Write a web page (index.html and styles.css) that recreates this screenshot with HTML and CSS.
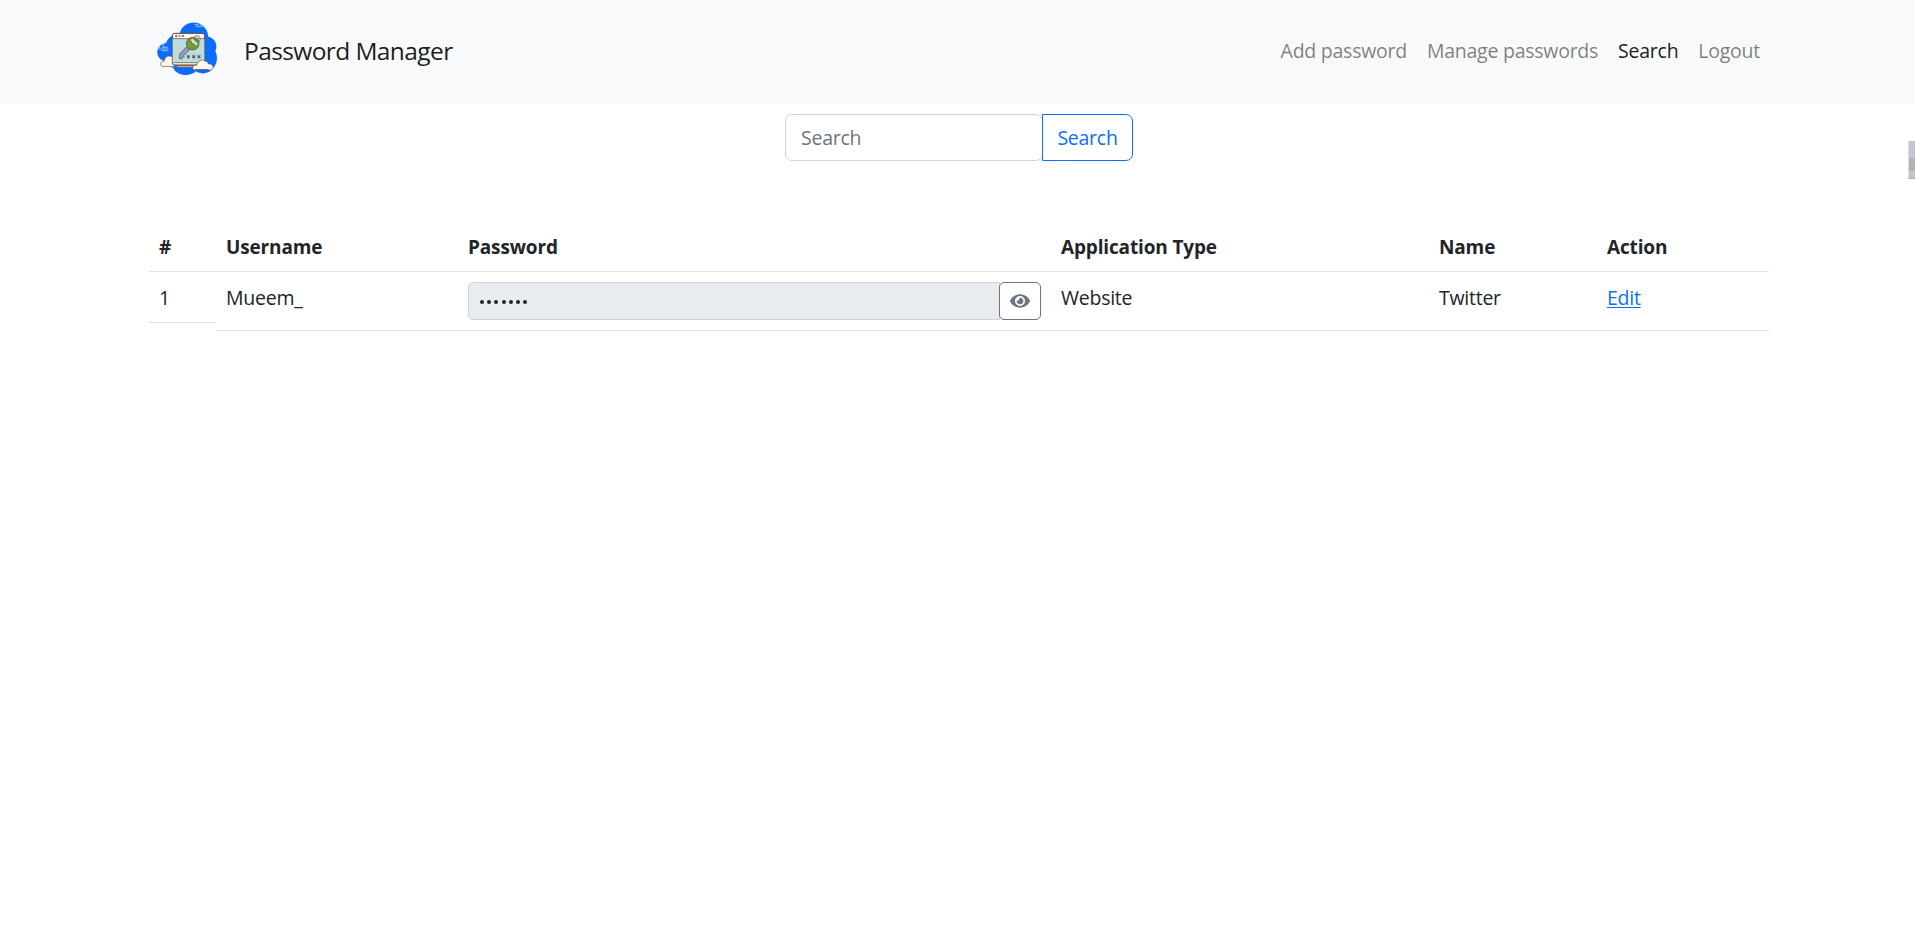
FILE: index.html
```html
<!DOCTYPE html>
<html lang="en">
<head>
    <meta charset="UTF-8">
    <meta name="viewport" content="width=device-width, initial-scale=1.0">
    <title>Password Manager</title>
    <link rel="stylesheet" href="styles.css">
</head>
<body>
    <nav class="navbar">
        <a class="navbar-brand" href="#">
            <svg class="logo" viewBox="30 30 192 168" aria-hidden="true">
                <path d="M104 72C112 26 184 24 190 80c22 5 29 27 21 43 10 22 4 44-10 54-8 15-34 17-48 7-20 18-57 14-68-9l-24-22c-31-2-34-49 2-54 7-19 25-28 41-27z" fill="#0b6cff"/>
                <path d="M149 44h11m4 0h7M153 49h22M38 112h8m5 0h18M40 117h31M50 122h18M55 102v10" stroke="#d8e8ff" stroke-width="2"/>
                <path d="M50 169c-7-7-2-16 7-15 2-12 10-18 21-15l11 4v27z" fill="#fff7e9" stroke="#694f50" stroke-width="2"/>
                <path d="M91 165h79l-8 8h-63z" fill="#b9a9a5" stroke="#59403f" stroke-width="2"/>
                <rect x="82" y="70" width="97" height="95" rx="7" fill="#fff8ee" stroke="#59403f" stroke-width="3"/>
                <path d="M83 86h95v72H83z" fill="#b9dedd"/>
                <path d="M83 86h95M85 158h92" stroke="#59403f" stroke-width="2"/>
                <circle cx="94" cy="78" r="3" fill="#ed6672" stroke="#59403f"/>
                <circle cx="104" cy="78" r="3" fill="#efbc4c" stroke="#59403f"/>
                <circle cx="114" cy="78" r="3" fill="#83a843" stroke="#59403f"/>
                <circle cx="156" cy="86" r="8" fill="none" stroke="#8b7774" stroke-width="5"/>
                <circle cx="156" cy="86" r="8" fill="none" stroke="#e4dcd5" stroke-width="2"/>
                <path d="m124 111 10 8-18 18 2 3-5 1-2 6-8-1 1-14z" fill="#9799b9" stroke="#514553" stroke-width="2"/>
                <circle cx="143" cy="101" r="19" fill="#739b38" stroke="#4c552e" stroke-width="2"/>
                <path d="m134 90 8-6 18 17-3 7-7-1-4-6-6-1-1-6z" fill="#d9e0d6" stroke="#4c552e" stroke-width="2"/>
                <path d="M130 134v12m-5-9 10 6m0-6-10 6m21-9v12m-5-9 10 6m0-6-10 6m21-9v12m-5-9 10 6m0-6-10 6" stroke="#55404a" stroke-width="2.5"/>
                <path d="M145 178c-5-8 2-14 10-12 3-13 15-20 24-13 7 0 10 4 11 9 10-2 17 6 13 14-3 4-7 3-12 3h-41z" fill="#fff7e9"/>
                <path d="M145 178c-5-8 2-14 10-12 3-13 15-20 24-13 7 0 10 4 11 9 10-2 17 6 13 14l-6 3m-6 0h-41z" fill="none" stroke="#694f50" stroke-width="2"/>
            </svg>
            <span>Password Manager</span>
        </a>
        <div class="navbar-nav">
            <a class="nav-link" href="#">Add password</a>
            <a class="nav-link" href="#">Manage passwords</a>
            <a class="nav-link active" href="#">Search</a>
            <a class="nav-link" href="#">Logout</a>
        </div>
    </nav>

    <form class="search-form">
        <input type="text" class="search-input" placeholder="Search">
        <button type="button" class="search-button">Search</button>
    </form>

    <div class="table">
        <div class="row header">
            <div>#</div>
            <div>Username</div>
            <div>Password</div>
            <div>Application Type</div>
            <div>Name</div>
            <div>Action</div>
        </div>
        <div class="row">
            <div class="row-number">1</div>
            <div>Mueem_</div>
            <div class="password-group">
                <div class="password-field"><i></i><i></i><i></i><i></i><i></i><i></i><i></i></div>
                <button type="button" class="eye-button" aria-label="Show password">
                    <svg viewBox="0 0 576 512"><path fill="#6c757d" fill-rule="evenodd" d="M573 241C518 136 411 64 288 64S58 136 3 241a32 32 0 0 0 0 30c55 105 162 177 285 177s230-72 285-177a32 32 0 0 0 0-30zM288 400a144 144 0 1 1 0-288 144 144 0 0 1 0 288zm0-240a95 95 0 0 0-25 4 48 48 0 0 1-67 67 96 96 0 1 0 92-71z"/></svg>
                </button>
            </div>
            <div>Website</div>
            <div>Twitter</div>
            <div><a class="edit-link" href="#">Edit</a></div>
        </div>
    </div>

    <div class="side-handle"></div>
</body>
</html>
```

FILE: styles.css
```css
:root {
    --primary: #0d6efd;
    --gray-600: #6c757d;
    --border: #dee2e6;
    --text: #212529;
}

* {
    margin: 0;
    padding: 0;
    box-sizing: border-box;
}

body {
    font-family: 'Open Sans', 'Noto Sans', sans-serif;
    font-size: 19.5px;
    letter-spacing: -0.25px;
    line-height: 30px;
    color: var(--text);
    background-color: white;
}

.navbar {
    display: flex;
    justify-content: space-between;
    align-items: center;
    height: 104px;
    padding: 0 155px 2px;
    background-color: #f8f9fa;
}

.navbar-brand {
    display: flex;
    align-items: center;
    gap: 25px;
    font-size: 24.5px;
    letter-spacing: -0.6px;
    color: rgba(0, 0, 0, 0.9);
    text-decoration: none;
}

.logo {
    width: 64px;
    height: 56px;
    position: relative;
    top: -3px;
}

.navbar-nav {
    display: flex;
    gap: 20px;
}

.nav-link {
    color: rgba(0, 0, 0, 0.5);
    text-decoration: none;
}

.nav-link.active {
    color: rgba(0, 0, 0, 0.9);
}

.search-form {
    display: flex;
    width: 348px;
    height: 47px;
    margin: 10px 0 0 785px;
}

.search-input {
    width: 258px;
    padding: 0 15px;
    border: 1px solid #ced4da;
    border-radius: 7px;
    font: inherit;
    letter-spacing: inherit;
}

.search-input::placeholder {
    color: var(--gray-600);
}

.search-button {
    flex: 1;
    margin-left: -1px;
    border: 1px solid var(--primary);
    border-radius: 0 7px 7px 0;
    background-color: white;
    color: var(--primary);
    font: inherit;
    letter-spacing: inherit;
}

.table {
    width: 1620px;
    margin: 60px 0 0 149px;
}

.row {
    display: grid;
    grid-template-columns: 67px 242px 593px 378px 168px 172px;
    height: 59px;
}

.row > div {
    padding: 11px 10px 9px;
    border-bottom: 1px solid var(--border);
}

.header {
    height: 51px;
    font-size: 19px;
    font-weight: 700;
    letter-spacing: -0.15px;
}

.row > .row-number {
    height: 51px;
}

.row > .password-group {
    display: flex;
    padding-top: 10px;
}

.password-field {
    display: flex;
    flex: 1;
    align-items: center;
    gap: 3.2px;
    height: 38px;
    padding: 2px 11px 0;
    border: 1px solid #ced4da;
    border-radius: 5px 0 0 5px;
    background-color: #e9ecef;
}

.password-field i {
    width: 4px;
    height: 4px;
    border-radius: 50%;
    background-color: var(--text);
}

.eye-button {
    width: 42px;
    height: 38px;
    margin-left: -1px;
    border: 1px solid var(--gray-600);
    border-radius: 5px;
    background-color: white;
}

.eye-button svg {
    display: block;
    width: 20px;
    height: 18px;
    margin: 0 auto;
}

.edit-link {
    color: var(--primary);
    text-underline-offset: 2px;
}

/* collapsed panel handle on the window edge */
.side-handle {
    position: absolute;
    top: 141px;
    right: 0;
    width: 7px;
    height: 38px;
    border-left: 1px solid #dedfe5;
    border-bottom: 1px solid #a9abb0;
    background: linear-gradient(#c5c7d0 0 47%, #b1b3b7 47% 82%, #c2c4cc 82%);
}
```
